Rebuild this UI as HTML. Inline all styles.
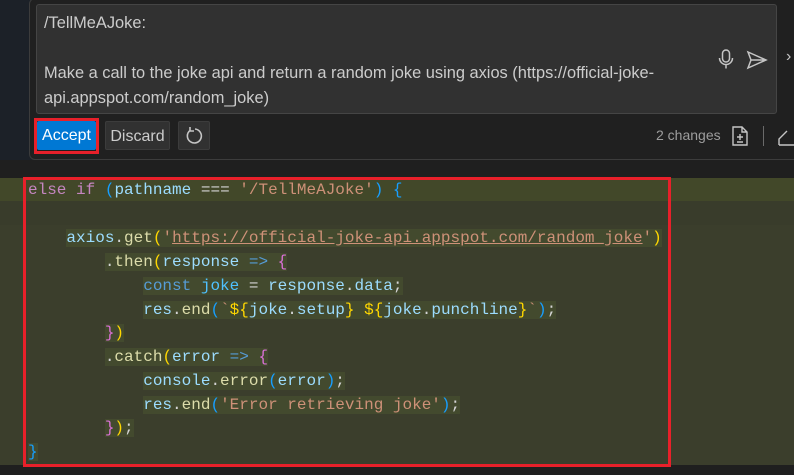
<!DOCTYPE html>
<html><head><meta charset="utf-8"><style>
body{margin:0;width:794px;height:475px;overflow:hidden;background:#1f1f1f;position:relative;font-family:"Liberation Sans",sans-serif}
.top{position:absolute;left:0;top:0;width:794px;height:160px;background:#1c2128}
.widget{position:absolute;left:29px;top:-2px;width:780px;height:160px;background:#202020;border:1px solid #3c3c3c;border-radius:6px}
.inp{position:absolute;left:36px;top:4px;width:739px;height:108px;background:#313131;border:1px solid #454545;border-radius:3px;color:#cccccc;font-size:16.4px;line-height:25px}
.inp div{padding-left:7px}
.btn{position:absolute;top:121px;height:29px;font-size:16px;line-height:29px;border-radius:2px;text-align:center}
.code{position:absolute;left:0;top:178px;width:794px;height:287px;background:#3b3e2c}
.ln{position:absolute;left:0;width:794px;height:24px;font-family:"Liberation Mono",monospace;font-size:16px;line-height:24px;white-space:pre;color:#9cdcfe}
.hl{background:#434a2e}
.k{color:#c586c0}.b{color:#569cd6}.s{color:#ce9178}.y{color:#ffd700}.p{color:#da70d6}.bl{color:#179fff}.w{color:#d4d4d4}.f{color:#dcdcaa}
</style></head><body>
<div class="top"></div>
<div class="widget"></div>
<div class="inp">
<div style="margin-top:6px">/TellMeAJoke:</div>
<div>&nbsp;</div>
<div>Make a call to the joke api and return a random joke using axios (https://official-joke-</div>
<div>api.appspot.com/random_joke)</div>
</div>
<svg style="position:absolute;left:716px;top:48px" width="20" height="22" viewBox="0 0 20 22" fill="none" stroke="#c5c5c5" stroke-width="1.5"><rect x="6.5" y="2" width="7" height="12" rx="3.5"/><path d="M3.5 10a6.5 6.5 0 0 0 13 0M10 16.5v4"/></svg>
<svg style="position:absolute;left:746px;top:50px" width="22" height="20" viewBox="0 0 22 20" fill="none" stroke="#c5c5c5" stroke-width="1.5"><path d="M2 2l18 8-18 8 3-8zM5 10h15"/></svg>
<div style="position:absolute;left:786px;top:48px;color:#c5c5c5;font-size:16px">›</div>
<div style="position:absolute;left:34px;top:118px;width:65px;height:36px;border:3px solid #e8202a;box-sizing:border-box"></div>
<div class="btn" style="left:37px;width:59px;top:121px;background:#0078d4;color:#fff">Accept</div>
<div class="btn" style="left:105px;width:65px;background:#313131;border:1px solid #3c3c3c;color:#cccccc;box-sizing:border-box">Discard</div>
<div class="btn" style="left:178px;width:32px;background:#313131;border:1px solid #3c3c3c;box-sizing:border-box"><svg width="30" height="27" viewBox="0 0 30 27" fill="none" stroke="#c5c5c5" stroke-width="1.6"><path d="M11 8.5a7 7 0 1 0 5-1.5M11 5v4h4"/></svg></div>
<div style="position:absolute;left:656px;top:127px;color:#9d9d9d;font-size:14px">2 changes</div>
<svg style="position:absolute;left:731px;top:126px" width="18" height="20" viewBox="0 0 18 20" fill="none" stroke="#c5c5c5" stroke-width="1.4"><path d="M2 1h9l5 5v13H2zM11 1v5h5M9 8v6M6 11h6M6 16h6"/></svg>
<div style="position:absolute;left:763px;top:126px;width:1px;height:20px;background:#6a6a6a"></div>
<svg style="position:absolute;left:778px;top:126px" width="16" height="20" viewBox="0 0 16 20" fill="none" stroke="#c5c5c5" stroke-width="1.4"><path d="M1 19v-6l8-8M1 19h15"/></svg>

<div class="code">
<div class="ln" style="top:0;background:#424829"></div>
<div class="ln" style="top:23px;background:#393c2b"></div>
</div>
<div class="ln" style="top:178px;left:28px;width:auto"><span class="k">else if</span> <span class="bl">(</span>pathname <span class="w">===</span> <span class="s">'/TellMeAJoke'</span><span class="bl">)</span> <span class="bl">{</span></div>
<div class="ln" style="top:226px;left:28px;width:auto">    <span class="hl">axios<span class="w">.</span><span class="f">get</span><span class="y">(</span><span class="s">'<u>https://official-joke-api.appspot.com/random_joke</u>'</span><span class="y">)</span></span></div>
<div class="ln" style="top:250px;left:28px;width:auto">        <span class="hl"><span class="w">.</span><span class="f">then</span><span class="y">(</span>response <span class="b">=&gt;</span> <span class="p">{</span></span></div>
<div class="ln" style="top:274px;left:28px;width:auto">            <span class="hl"><span class="b">const</span> <span style="color:#4fc1ff">joke</span> <span class="w">=</span> response<span class="w">.</span>data<span class="w">;</span></span></div>
<div class="ln" style="top:298px;left:28px;width:auto">            <span class="hl">res<span class="w">.</span><span class="f">end</span><span class="bl">(</span><span class="s">`</span><span class="y">${</span>joke<span class="w">.</span>setup<span class="y">}</span> <span class="y">${</span>joke<span class="w">.</span>punchline<span class="y">}</span><span class="s">`</span><span class="bl">)</span><span class="w">;</span></span></div>
<div class="ln" style="top:321px;left:28px;width:auto">        <span class="hl"><span class="p">}</span><span class="y">)</span></span></div>
<div class="ln" style="top:345px;left:28px;width:auto">        <span class="hl"><span class="w">.</span><span class="f">catch</span><span class="y">(</span>error <span class="b">=&gt;</span> <span class="p">{</span></span></div>
<div class="ln" style="top:369px;left:28px;width:auto">            <span class="hl">console<span class="w">.</span><span class="f">error</span><span class="bl">(</span>error<span class="bl">)</span><span class="w">;</span></span></div>
<div class="ln" style="top:393px;left:28px;width:auto">            <span class="hl">res<span class="w">.</span><span class="f">end</span><span class="bl">(</span><span class="s">'Error retrieving joke'</span><span class="bl">)</span><span class="w">;</span></span></div>
<div class="ln" style="top:416px;left:28px;width:auto">        <span class="hl"><span class="p">}</span><span class="y">)</span><span class="w">;</span></span></div>
<div class="ln" style="top:440px;left:28px;width:auto"><span class="hl bl">}</span></div>
<div style="position:absolute;left:23px;top:177px;width:648px;height:290px;border:3px solid #e8202a;box-sizing:border-box"></div>
</body></html>
